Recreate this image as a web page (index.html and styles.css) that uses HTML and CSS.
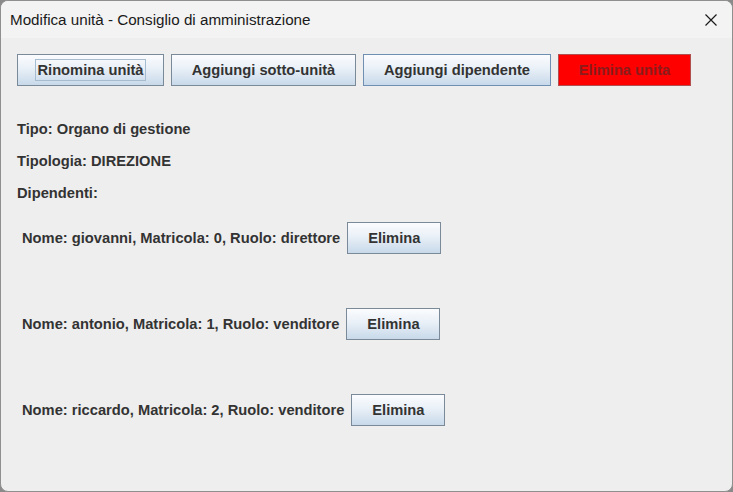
FILE: index.html
```html
<!DOCTYPE html>
<html lang="it">
<head>
<meta charset="utf-8">
<title>Modifica unità</title>
<link rel="stylesheet" href="styles.css">
</head>
<body>
<div class="window">
  <div class="titlebar">
    <span class="title">Modifica unità - Consiglio di amministrazione</span>
    <svg class="close" width="12" height="12" viewBox="0 0 12 12"><path d="M0.5 0.5 L11.5 11.5 M11.5 0.5 L0.5 11.5" stroke="#1a1a1a" stroke-width="1.2" fill="none"/></svg>
  </div>
  <div class="content">
    <div class="toolbar">
      <button class="btn w1"><span class="focus">Rinomina unità</span></button>
      <button class="btn w2">Aggiungi sotto-unità</button>
      <button class="btn w3">Aggiungi dipendente</button>
      <button class="btn w4 danger">Elimina unita</button>
    </div>
    <div class="label">Tipo: Organo di gestione</div>
    <div class="label">Tipologia: DIREZIONE</div>
    <div class="label">Dipendenti:</div>
    <div class="employees">
      <div class="emp"><span class="emp-text">Nome: giovanni, Matricola: 0, Ruolo: direttore</span><button class="btn del">Elimina</button></div>
      <div class="emp"><span class="emp-text">Nome: antonio, Matricola: 1, Ruolo: venditore</span><button class="btn del">Elimina</button></div>
      <div class="emp"><span class="emp-text">Nome: riccardo, Matricola: 2, Ruolo: venditore</span><button class="btn del">Elimina</button></div>
    </div>
  </div>
</div>
</body>
</html>
```

FILE: styles.css
```css
html, body {
  margin: 0;
  padding: 0;
}
body {
  width: 733px;
  height: 492px;
  background: #8a8a8a;
  overflow: hidden;
}
.window {
  box-sizing: border-box;
  width: 733px;
  height: 492px;
  border: 1px solid #8f8f8f;
  border-radius: 8px;
  background: #eeeeee;
  overflow: hidden;
  font-family: "Liberation Sans", Arial, sans-serif;
}
.titlebar {
  height: 37px;
  background: #f3f3f3;
  display: flex;
  align-items: center;
  justify-content: space-between;
  padding: 0 15px 0 9px;
}
.title {
  font-family: "Liberation Sans", Arial, sans-serif;
  font-size: 15.2px;
  color: #1a1a1a;
}
.close {
  display: block;
}
.content {
  padding: 16px 0 0 16px;
}
.toolbar {
  display: flex;
  gap: 7px;
  margin-bottom: 27px;
}
.btn {
  box-sizing: border-box;
  height: 32px;
  border: 1px solid #7a8a99;
  background: linear-gradient(to bottom, #fbfcfe 0%, #e9f0f7 45%, #c8d9ea 100%);
  font-family: "Liberation Sans", Arial, sans-serif;
  font-weight: bold;
  font-size: 14.7px;
  color: #333333;
  padding: 0;
  margin: 0;
  display: flex;
  align-items: center;
  justify-content: center;
}
.w1 { width: 147px; }
.w2 { width: 185px; }
.w3 { width: 188px; border-color: #6f8fb3; }
.w4 { width: 133px; }
.focus {
  border: 1px solid #a8bccf;
  padding: 2px 1px;
}
.danger {
  background: #ff0000;
  border-color: #b05050;
  color: #8a1c1c;
}
.label {
  height: 32px;
  line-height: 32px;
  font-size: 14.7px;
  font-weight: bold;
  color: #333333;
}
.employees {
  margin-top: 13px;
  padding-left: 5px;
  display: flex;
  flex-direction: column;
  gap: 54px;
}
.emp {
  display: flex;
  align-items: center;
  gap: 7px;
}
.emp-text {
  font-size: 14.7px;
  font-weight: bold;
  color: #333333;
}
.del {
  width: 94px;
}
```
